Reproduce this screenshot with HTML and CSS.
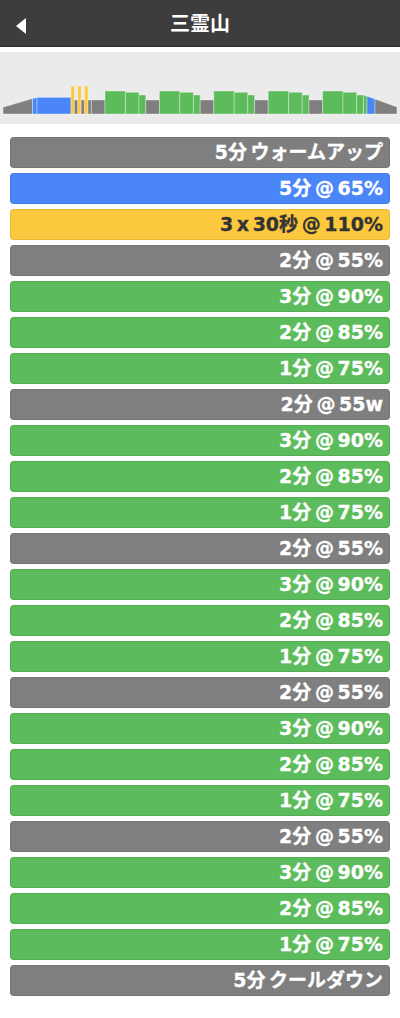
FILE: index.html
```html
<!DOCTYPE html>
<html lang="ja">
<head>
    <meta charset="UTF-8">
    <meta name="viewport" content="width=device-width, initial-scale=1.0">
    <title>三霊山</title>
    <link rel="stylesheet" href="styles.css">
</head>
<body>
    <!-- ヘッダー -->
    <div class="top-bar">
        <span class="back-button"></span>
        <h1 class="title">三霊山</h1>
    </div>

    <!-- ワークアウトのグラフ -->
    <div class="profile">
        <svg class="profile-chart" width="400" height="72" viewBox="0 0 400 72">
            <g stroke="rgba(255,255,255,0.35)" stroke-width="1">
                <!-- warmup -->
                <polygon class="z-gray" points="3,62 3,55.3 32.5,46.6 32.5,62"/>
                <polygon class="z-blue" points="32.5,62 32.5,46.6 37,45.4 37,62"/>
                <rect class="z-blue" x="37" y="45.4" width="34" height="16.6"/>
                <!-- 3 x 30秒 -->
                <rect class="z-yellow" x="71" y="34" width="3.4" height="28"/>
                <rect class="z-gray" x="74.4" y="48" width="3.4" height="14"/>
                <rect class="z-yellow" x="77.8" y="34" width="3.4" height="28"/>
                <rect class="z-gray" x="81.2" y="48" width="3.4" height="14"/>
                <rect class="z-yellow" x="84.6" y="34" width="3.4" height="28"/>
                <rect class="z-gray" x="88" y="48" width="3.4" height="14"/>
                <rect class="z-gray" x="91.4" y="48" width="13.6" height="14"/>
                <!-- block 1 -->
                <rect class="z-green" x="105" y="39" width="20.4" height="23"/>
                <rect class="z-green" x="125.4" y="40.3" width="13.6" height="21.7"/>
                <rect class="z-green" x="139" y="43" width="6.8" height="19"/>
                <rect class="z-gray" x="145.8" y="48" width="13.6" height="14"/>
                <!-- block 2 -->
                <rect class="z-green" x="159.4" y="39" width="20.4" height="23"/>
                <rect class="z-green" x="179.8" y="40.3" width="13.6" height="21.7"/>
                <rect class="z-green" x="193.4" y="43" width="6.8" height="19"/>
                <rect class="z-gray" x="200.2" y="48" width="13.6" height="14"/>
                <!-- block 3 -->
                <rect class="z-green" x="213.8" y="39" width="20.4" height="23"/>
                <rect class="z-green" x="234.2" y="40.3" width="13.6" height="21.7"/>
                <rect class="z-green" x="247.8" y="43" width="6.8" height="19"/>
                <rect class="z-gray" x="254.6" y="48" width="13.6" height="14"/>
                <!-- block 4 -->
                <rect class="z-green" x="268.2" y="39" width="20.4" height="23"/>
                <rect class="z-green" x="288.6" y="40.3" width="13.6" height="21.7"/>
                <rect class="z-green" x="302.2" y="43" width="6.8" height="19"/>
                <rect class="z-gray" x="309" y="48" width="13.6" height="14"/>
                <!-- block 5 -->
                <rect class="z-green" x="322.6" y="39" width="20.4" height="23"/>
                <rect class="z-green" x="343" y="40.3" width="13.6" height="21.7"/>
                <rect class="z-green" x="356.6" y="43" width="6.8" height="19"/>
                <!-- cooldown -->
                <polygon class="z-green" points="363.4,62 363.4,43 367,44.3 367,62"/>
                <polygon class="z-blue" points="367,62 367,44.3 375,47.1 375,62"/>
                <polygon class="z-gray" points="375,62 375,47.1 397,55 397,62"/>
            </g>
        </svg>
    </div>

    <!-- インターバル一覧 -->
    <div class="interval-list">
        <div class="interval gray">5分 ウォームアップ</div>
        <div class="interval blue">5分 @ 65%</div>
        <div class="interval yellow">3 x 30秒 @ 110%</div>
        <div class="interval gray">2分 @ 55%</div>
        <div class="interval green">3分 @ 90%</div>
        <div class="interval green">2分 @ 85%</div>
        <div class="interval green">1分 @ 75%</div>
        <div class="interval gray">2分 @ 55w</div>
        <div class="interval green">3分 @ 90%</div>
        <div class="interval green">2分 @ 85%</div>
        <div class="interval green">1分 @ 75%</div>
        <div class="interval gray">2分 @ 55%</div>
        <div class="interval green">3分 @ 90%</div>
        <div class="interval green">2分 @ 85%</div>
        <div class="interval green">1分 @ 75%</div>
        <div class="interval gray">2分 @ 55%</div>
        <div class="interval green">3分 @ 90%</div>
        <div class="interval green">2分 @ 85%</div>
        <div class="interval green">1分 @ 75%</div>
        <div class="interval gray">2分 @ 55%</div>
        <div class="interval green">3分 @ 90%</div>
        <div class="interval green">2分 @ 85%</div>
        <div class="interval green">1分 @ 75%</div>
        <div class="interval gray">5分 クールダウン</div>
    </div>
</body>
</html>
```

FILE: styles.css
```css
/* 基本样式 */
body {
    margin: 0;
    background-color: #fff;
    font-family: "DejaVu Sans", "Noto Sans CJK JP", sans-serif;
}

.top-bar {
    position: relative;
    display: flex;
    justify-content: center;
    align-items: center;
    height: 46px;
    background-color: #3d3d3d;
    border-bottom: 1px solid #2b2b2b;
}

.back-button {
    position: absolute;
    left: 16px;
    top: 18px;
    width: 0;
    height: 0;
    border-top: 8px solid transparent;
    border-bottom: 8px solid transparent;
    border-right: 10px solid #fff;
}

.title {
    margin: 0;
    color: #fff;
    font-family: "Noto Sans CJK JP", sans-serif;
    font-size: 20px;
    font-weight: 700;
    line-height: 1;
}

.profile {
    margin-top: 5px;
    height: 72px;
    background-color: #ebebeb;
}

.profile-chart {
    display: block;
}

.z-gray { fill: #7f7f7f; }
.z-blue { fill: #4a86f7; }
.z-yellow { fill: #fcc93e; }
.z-green { fill: #5cbb5a; }

.interval-list {
    padding: 13px 10px 0;
}

.interval {
    box-sizing: border-box;
    height: 31px;
    margin-bottom: 5px;
    padding: 0 6px;
    border: 1px solid rgba(0, 0, 0, 0.08);
    border-radius: 4px;
    color: #fff;
    font-size: 19px;
    font-weight: 700;
    line-height: 29px;
    word-spacing: -3px;
    text-align: right;
    white-space: nowrap;
    -webkit-text-stroke: 0.3px currentColor;
}

.interval.gray { background-color: #7f7f7f; }
.interval.blue { background-color: #4a86f7; }
.interval.green { background-color: #5cbb5a; }

.interval.yellow {
    background-color: #fcc93e;
    color: #333;
}
```
